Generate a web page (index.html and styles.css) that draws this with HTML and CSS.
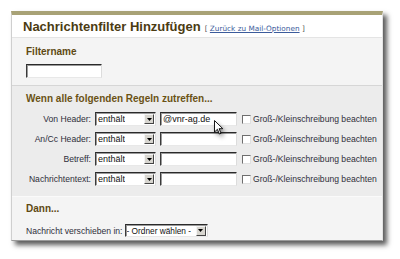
FILE: index.html
```html
<!DOCTYPE html>
<html lang="de">
<head>
<meta charset="utf-8">
<title>Nachrichtenfilter Hinzufügen</title>
<link rel="stylesheet" href="styles.css">
</head>
<body>
<div class="panel">
  <div class="title-bar">
    <h1 class="title">Nachrichtenfilter Hinzufügen</h1>
    <span class="back">[ <a href="#">Zurück zu Mail-Optionen</a> ]</span>
  </div>
  <div class="section sec-name">
    <h2 class="heading">Filtername</h2>
    <div class="field name-field"></div>
  </div>
  <div class="section sec-rules">
    <h2 class="heading rules-heading">Wenn alle folgenden Regeln zutreffen...</h2>
    <div class="rule">
      <span class="label">Von Header:</span>
      <div class="select op"><span class="sel-text">enthält</span><span class="arrow"><svg width="5" height="3" viewBox="0 0 5 3"><path d="M0 0H5L2.5 3Z" fill="#000"/></svg></span></div>
      <div class="field value">@vnr-ag.de</div>
      <span class="check"></span>
      <span class="check-label">Groß-/Kleinschreibung beachten</span>
    </div>
    <div class="rule">
      <span class="label">An/Cc Header:</span>
      <div class="select op"><span class="sel-text">enthält</span><span class="arrow"><svg width="5" height="3" viewBox="0 0 5 3"><path d="M0 0H5L2.5 3Z" fill="#000"/></svg></span></div>
      <div class="field value"></div>
      <span class="check"></span>
      <span class="check-label">Groß-/Kleinschreibung beachten</span>
    </div>
    <div class="rule">
      <span class="label">Betreff:</span>
      <div class="select op"><span class="sel-text">enthält</span><span class="arrow"><svg width="5" height="3" viewBox="0 0 5 3"><path d="M0 0H5L2.5 3Z" fill="#000"/></svg></span></div>
      <div class="field value"></div>
      <span class="check"></span>
      <span class="check-label">Groß-/Kleinschreibung beachten</span>
    </div>
    <div class="rule">
      <span class="label">Nachrichtentext:</span>
      <div class="select op"><span class="sel-text">enthält</span><span class="arrow"><svg width="5" height="3" viewBox="0 0 5 3"><path d="M0 0H5L2.5 3Z" fill="#000"/></svg></span></div>
      <div class="field value"></div>
      <span class="check"></span>
      <span class="check-label">Groß-/Kleinschreibung beachten</span>
    </div>
  </div>
  <div class="section sec-then">
    <h2 class="heading">Dann...</h2>
    <div class="move-row">
      <span class="move-label">Nachricht verschieben in:</span>
      <div class="select folder"><span class="sel-text">- Ordner wählen -</span><span class="arrow"><svg width="5" height="3" viewBox="0 0 5 3"><path d="M0 0H5L2.5 3Z" fill="#000"/></svg></span></div>
    </div>
  </div>
</div>
<svg class="cursor" width="11" height="16" viewBox="0 0 11 16"><path d="M0.5 0.5V12L3.4 9.3L5.4 14L7 13.3L5.1 8.7H8.8Z" fill="#fff" stroke="#000" stroke-width="0.9" stroke-linejoin="round"/></svg>
</body>
</html>
```
FILE: styles.css
```css
html, body {
  margin: 0;
  padding: 0;
  background: #fff;
}
body {
  font-family: "Liberation Sans", Arial, sans-serif;
  position: relative;
  width: 400px;
  height: 259px;
  overflow: hidden;
}
.panel {
  margin: 11px 0 0 11px;
  width: 372px;
  box-sizing: border-box;
  background: #fff;
  border-top: 4px solid #a8a276;
  border-left: 1px solid #cfcfcf;
  border-right: 1px solid #e2e2e2;
  border-bottom: 1px solid #9a9a9a;
  box-shadow: 4px 4px 5px rgba(0, 0, 0, 0.65);
}
.title-bar {
  height: 23px;
  box-sizing: border-box;
  padding: 4px 0 0 11px;
  display: flex;
  align-items: baseline;
  border-bottom: 1px solid #e4e4e4;
}
.title {
  margin: 0;
  font-size: 13px;
  font-weight: bold;
  color: #4b3b12;
  line-height: 15px;
}
.back {
  margin-left: 4px;
  font-family: "DejaVu Sans", Verdana, sans-serif;
  font-size: 7.3px;
  color: #555;
}
.back a {
  color: #3b5b9b;
  text-decoration: underline;
}
.section {
  padding-left: 14px;
}
.heading {
  margin: 0;
  font-size: 10px;
  line-height: 12px;
  font-weight: bold;
  color: #5e4912;
}
.sec-name {
  height: 47px;
  box-sizing: border-box;
  padding-top: 8px;
  background: #f4f4f4;
}
.field {
  box-sizing: border-box;
  height: 14px;
  background: #fff;
  border-style: solid;
  border-width: 1px;
  border-color: #2a2a2a #dcdcdc #e8e8e8 #3a3a3a;
  box-shadow: inset 1px 1px 0 #9a9a9a;
  font-size: 9px;
  line-height: 12px;
  padding-left: 2px;
  color: #111;
}
.name-field {
  margin-top: 6px;
  width: 76px;
}
.sec-rules {
  height: 111px;
  box-sizing: border-box;
  padding-top: 7px;
  background: #ececec;
  border-top: 1px solid #d6d6d6;
}
.rules-heading {
  color: #6a5214;
  margin-bottom: 7px;
}
.rule {
  display: flex;
  align-items: center;
  height: 14px;
  margin-bottom: 6px;
  font-size: 8.6px;
  color: #2e2e3a;
}
.label {
  width: 65px;
  text-align: right;
  margin-right: 4px;
  white-space: nowrap;
}
.select {
  box-sizing: border-box;
  height: 14px;
  display: flex;
  align-items: center;
  justify-content: space-between;
  background: #fff;
  border-style: solid;
  border-width: 1px;
  border-color: #2a2a2a #dcdcdc #e8e8e8 #3a3a3a;
  box-shadow: inset 1px 1px 0 #9a9a9a;
  padding: 0 1px 0 2px;
  font-size: 9px;
  color: #111;
}
.sel-text {
  white-space: nowrap;
  overflow: hidden;
}
.op {
  width: 61px;
}
.arrow {
  box-sizing: border-box;
  flex: none;
  width: 10px;
  height: 10px;
  background: #d8d6d0;
  border-style: solid;
  border-width: 1px;
  border-color: #f4f4f4 #444 #444 #f4f4f4;
  display: flex;
  align-items: center;
  justify-content: center;
}
.arrow svg {
  display: block;
}
.value {
  width: 77px;
  margin-left: 4px;
}
.check {
  box-sizing: border-box;
  width: 9px;
  height: 9px;
  margin-left: 5px;
  margin-right: 2px;
  background: #fff;
  border-style: solid;
  border-width: 1px;
  border-color: #6e6e6e #e0e0e0 #e0e0e0 #6e6e6e;
}
.check-label {
  white-space: nowrap;
}
.sec-then {
  height: 44px;
  box-sizing: border-box;
  padding-top: 6px;
  background: #f4f4f4;
  border-top: 1px solid #fafafa;
}
.move-row {
  display: flex;
  align-items: center;
  margin-top: 9px;
  font-size: 8.6px;
  color: #2e2e3a;
}
.move-label {
  margin-right: 2px;
  white-space: nowrap;
}
.folder {
  width: 83px;
  height: 13px;
  font-size: 8.3px;
  padding-left: 1px;
}
.cursor {
  position: absolute;
  left: 214px;
  top: 120px;
  filter: drop-shadow(2px 3px 2px rgba(0, 0, 0, 0.45));
}
```
